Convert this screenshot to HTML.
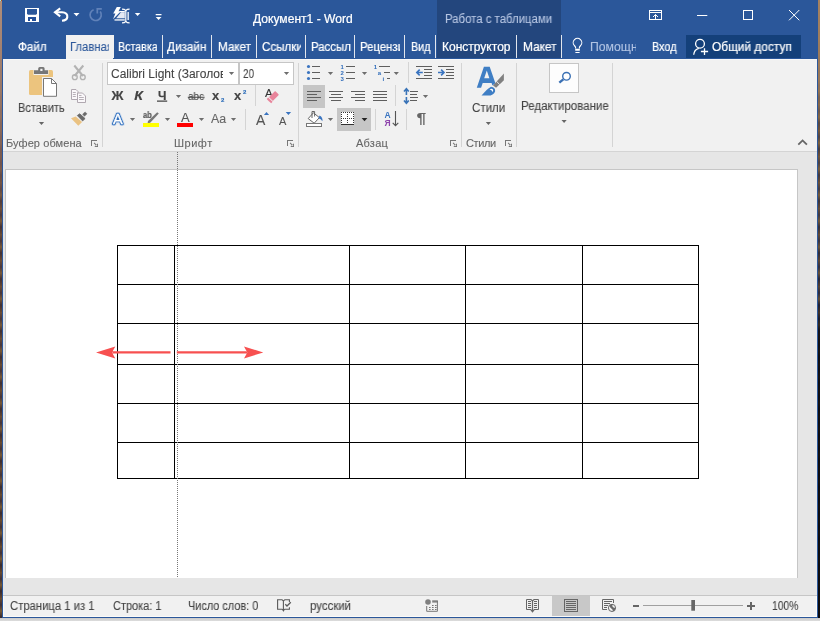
<!DOCTYPE html>
<html lang="ru"><head><meta charset="utf-8"><title>Документ1 - Word</title>
<style>
html,body{margin:0;padding:0}
body{width:820px;height:621px;overflow:hidden;position:relative;background:linear-gradient(#d9d9d9,#d9d9d9 618px,#cbcbcb 618px,#dcdcdc 621px);font-family:"Liberation Sans",sans-serif;font-size:12px;color:#444}
.a{position:absolute}
.t{will-change:transform;-webkit-text-stroke:0.1px;position:absolute;white-space:nowrap;line-height:14px;height:14px;transform-origin:0 0}
#deskL{left:0;top:0;width:2px;height:618px;background:linear-gradient(rgba(176,142,122,1) 0,rgba(154,120,104,.95) 100px,rgba(122,90,80,.9) 160px,rgba(90,64,56,.55) 220px,rgba(70,50,40,.45) 618px),repeating-linear-gradient(#8a6434 0,#3a3044 7px,#a07a3c 13px,#2a2234 19px,#7a5530 26px)}
#deskR{left:818px;top:0;width:2px;height:618px;background:linear-gradient(rgba(166,130,96,1) 0,rgba(156,122,90,.95) 80px,rgba(110,84,64,.6) 130px,rgba(40,36,50,.5) 300px,rgba(10,10,16,.92) 340px,rgba(8,8,12,.96) 618px),repeating-linear-gradient(#8a6434 0,#2a3050 7px,#a07a3c 13px,#1a2240 19px,#7a5530 26px)}
#win{left:2px;top:0;width:816px;height:618px;background:#2b579a}
#title{left:3px;top:0;width:814px;height:59px;background:#2b579a}
#ctx{left:437px;top:0;width:124px;height:58px;background:#23467d}
#ribbon{left:3px;top:59px;width:814px;height:92px;background:#f1f1f1;border-top:1px solid #f8f8f8;box-sizing:border-box}
#ribline{left:3px;top:151px;width:814px;height:1px;background:#d4d4d4}
#doc{left:3px;top:152px;width:814px;height:443px;background:#e6e6e6}
#page{left:5px;top:169px;width:793px;height:409px;background:#fff;border:1px solid #c6c6c6;border-bottom:none;box-sizing:border-box}
#stline{left:3px;top:595px;width:814px;height:1px;background:#c6c6c6}
#status{left:3px;top:596px;width:814px;height:21px;background:#f1f1f1;border-bottom:1px solid #fbfaf7;border-right:1px solid #fbfaf7;border-left:1px solid #fbfaf7;box-sizing:border-box}
.tab{color:#fff}
.sep{position:absolute;width:1px;background:#d4d4d4}
.tsep{position:absolute;width:1px;top:35px;height:23px;background:#e2e6ee}
</style></head><body>
<div class="a" id="win"></div>
<div class="a" id="deskL"></div><div class="a" id="deskR"></div>
<div class="a" id="title"></div>
<div class="a" id="ctx"></div>
<div class="a" id="ribbon"></div>
<div class="a" id="ribline"></div>
<div class="a" id="doc"></div>
<div class="a" id="page"></div>
<div class="a" id="stline"></div>
<div class="a" id="status"></div>
<div class="a" style="left:0;top:0;width:1px;height:1px;background:#a0f0e0;z-index:3"></div><div class="a" style="left:1px;top:0;width:1px;height:1px;background:#b84a10;z-index:3"></div>
<div class="a" style="left:66px;top:35px;width:48px;height:24px;background:#f1f1f1"></div><div class="a" style="left:113px;top:58px;width:1px;height:1px;background:#2b579a"></div>
<div class="a" style="left:686px;top:35px;width:115px;height:23px;background:#14407a"></div>
<div class="tsep" style="left:162px"></div><div class="tsep" style="left:211px"></div><div class="tsep" style="left:256px"></div><div class="tsep" style="left:305px"></div><div class="tsep" style="left:354px"></div><div class="tsep" style="left:404px"></div><div class="tsep" style="left:435px"></div><div class="tsep" style="left:516px"></div><div class="tsep" style="left:561px"></div>
<div class="sep" style="left:102px;top:63px;height:84px"></div>
<div class="sep" style="left:298px;top:63px;height:84px"></div>
<div class="sep" style="left:461px;top:63px;height:84px"></div>
<div class="sep" style="left:516px;top:63px;height:84px"></div>
<div class="sep" style="left:612px;top:63px;height:84px"></div>
<div class="sep" style="left:255px;top:85px;height:21px"></div>
<div class="sep" style="left:245px;top:109px;height:21px"></div>
<div class="sep" style="left:408px;top:62px;height:21px"></div>
<div class="sep" style="left:395px;top:85px;height:21px"></div>
<div class="sep" style="left:375px;top:109px;height:21px"></div>
<div class="sep" style="left:406px;top:109px;height:21px"></div>
<div class="a" style="left:107px;top:62px;width:132px;height:23px;box-sizing:border-box;border:1px solid #c6c6c6;background:#fff"></div>
<div class="a" style="left:239px;top:62px;width:55px;height:23px;box-sizing:border-box;border:1px solid #c6c6c6;background:#fff"></div>
<div class="a" style="left:303px;top:85px;width:22px;height:23px;background:#c6c6c6"></div>
<div class="a" style="left:337px;top:108px;width:34px;height:23px;background:#c6c6c6"></div>
<div class="a" style="left:549px;top:63px;width:30px;height:30px;box-sizing:border-box;border:1px solid #c6c6c6;background:#fdfdfd"></div>
<div class="a" style="left:552px;top:596px;width:38px;height:20px;background:#c8c8c8"></div>

<svg class="a" style="left:0;top:0" width="820" height="621" viewBox="0 0 820 621">
<g fill="none" stroke="#000" stroke-width="1" shape-rendering="crispEdges">
<rect x="117.500" y="245.500" width="581" height="233"/>
<path d="M117,284.500 H699 M117,323.500 H699 M117,364.500 H699 M117,403.500 H699 M117,442.500 H699"/>
<path d="M174.500,245 V479 M349.500,245 V479 M465.500,245 V479 M582.500,245 V479"/>
</g>
<path d="M177.500,152 V578" stroke="#777" stroke-width="1" stroke-dasharray="1 1" fill="none" shape-rendering="crispEdges"/>
<g fill="#f75050">
<path d="M112.500,351.300 H170.500 V353.500 H112.500z M96,352.400 L115.300,346.400 L112,352.400 L115.300,358.400z"/>
<path d="M176.800,351.300 H247 V353.500 H176.800z M263.300,352.400 L244,346.400 L247.300,352.400 L244,358.400z"/>
</g>
</svg>

<div class="t" style="left:253px;top:11.99px;color:#fff;-webkit-text-stroke:0.22px;transform:scaleX(1.0068);">Документ1 - Word</div>
<div class="t" style="left:445px;top:11.99px;color:#b7c6e3;transform:scaleX(0.9482);">Работа с таблицами</div>
<div class="t" style="left:18px;top:39.99px;color:#fff;-webkit-text-stroke:0.22px;transform:scaleX(0.9741);">Файл</div>
<div class="t" style="left:69.5px;top:39.99px;color:#2b579a;width:41.70px;overflow:hidden;transform:scaleX(0.94);">Главная</div>
<div class="t" style="left:118.3px;top:39.99px;color:#fff;-webkit-text-stroke:0.22px;width:44.04px;overflow:hidden;transform:scaleX(0.89);">Вставка</div>
<div class="t" style="left:167px;top:39.99px;color:#fff;-webkit-text-stroke:0.22px;transform:scaleX(0.9791);">Дизайн</div>
<div class="t" style="left:217.5px;top:39.99px;color:#fff;-webkit-text-stroke:0.22px;transform:scaleX(0.9715);">Макет</div>
<div class="t" style="left:261.5px;top:39.99px;color:#fff;-webkit-text-stroke:0.22px;width:40.21px;overflow:hidden;transform:scaleX(0.965);">Ссылки</div>
<div class="t" style="left:310.5px;top:39.99px;color:#fff;-webkit-text-stroke:0.22px;width:41.68px;overflow:hidden;transform:scaleX(0.95);">Рассылки</div>
<div class="t" style="left:359.5px;top:39.99px;color:#fff;-webkit-text-stroke:0.22px;width:42.33px;overflow:hidden;transform:scaleX(0.945);">Рецензирование</div>
<div class="t" style="left:410.5px;top:39.99px;color:#fff;-webkit-text-stroke:0.22px;transform:scaleX(0.8978);">Вид</div>
<div class="t" style="left:441.5px;top:39.99px;color:#fff;-webkit-text-stroke:0.22px;transform:scaleX(1.0011);">Конструктор</div>
<div class="t" style="left:522.5px;top:39.99px;color:#fff;-webkit-text-stroke:0.22px;transform:scaleX(0.9862);">Макет</div>
<div class="t" style="left:590px;top:39.99px;color:#b0c3e3;width:44.71px;overflow:hidden;transform:scaleX(1.02);">Помощник</div>
<div class="t" style="left:651.5px;top:39.99px;color:#fff;-webkit-text-stroke:0.22px;transform:scaleX(0.9022);">Вход</div>
<div class="t" style="left:712.4px;top:39.99px;color:#fff;-webkit-text-stroke:0.22px;transform:scaleX(0.9898);">Общий доступ</div>
<div class="t" style="left:17.7px;top:100.99px;color:#444;transform:scaleX(0.9199);">Вставить</div>
<div class="t" style="left:6.4px;top:136.14px;color:#666;font-size:11px;letter-spacing:0.086px;">Буфер обмена</div>
<div class="t" style="left:173.7px;top:136.14px;color:#666;font-size:11px;letter-spacing:0.499px;">Шрифт</div>
<div class="t" style="left:356px;top:136.14px;color:#666;font-size:11px;letter-spacing:0.235px;">Абзац</div>
<div class="t" style="left:465.9px;top:136.14px;color:#666;font-size:11px;letter-spacing:-0.401px;">Стили</div>
<div class="t" style="left:472.3px;top:100.99px;color:#444;transform:scaleX(0.9630);">Стили</div>
<div class="t" style="left:520.8px;top:98.99px;color:#444;transform:scaleX(0.9604);">Редактирование</div>
<div class="t" style="left:111px;top:66.99px;color:#444;width:111.70px;overflow:hidden;transform:scaleX(1.0);">Calibri Light (Заголовки)</div>
<div class="t" style="left:242.5px;top:66.99px;color:#444;transform:scaleX(0.8234);">20</div>
<div class="t" style="left:10px;top:598.99px;color:#444;transform:scaleX(0.9394);">Страница 1 из 1</div>
<div class="t" style="left:112.5px;top:598.99px;color:#444;transform:scaleX(0.9143);">Строка: 1</div>
<div class="t" style="left:187.5px;top:598.99px;color:#444;transform:scaleX(0.9086);">Число слов: 0</div>
<div class="t" style="left:309.7px;top:598.99px;color:#444;transform:scaleX(0.9521);">русский</div>
<div class="t" style="left:771.6px;top:598.99px;color:#444;transform:scaleX(0.8598);">100%</div>
<div class="t" style="left:111.83px;top:88.99px;color:#444;font-weight:bold;transform:scaleX(1.1);transform-origin:50% 50%;-webkit-text-stroke:0.15px;">Ж</div>
<div class="t" style="left:135.04px;top:88.99px;color:#444;font-weight:bold;font-style:italic;transform:scaleX(1.18);transform-origin:50% 50%;-webkit-text-stroke:0.15px;">К</div>
<div class="t" style="left:157.63px;top:88.99px;color:#444;font-weight:bold;-webkit-text-stroke:0.15px;">Ч</div>
<div class="t" style="left:188.2px;top:89.34px;color:#444;font-size:11px;transform:scaleX(0.9070);">abc</div>
<div class="t" style="left:212.08px;top:88.65px;color:#444;font-weight:bold;font-size:13px;-webkit-text-stroke:0.15px;">x</div>
<div class="t" style="left:234.28px;top:88.65px;color:#444;font-weight:bold;font-size:13px;-webkit-text-stroke:0.15px;">x</div>
<div class="t" style="left:220.88px;top:93.07px;color:#2b6cb8;font-weight:bold;font-size:6px;-webkit-text-stroke:0.15px;">2</div>
<div class="t" style="left:242.98px;top:85.07px;color:#2b6cb8;font-weight:bold;font-size:6px;-webkit-text-stroke:0.15px;">2</div>
<div class="t" style="left:181.21px;top:111.25px;color:#555;font-size:13px;">A</div>
<div class="t" style="left:211.1px;top:111.59px;color:#666;transform:scaleX(1.0281);">Aa</div>
<div class="t" style="left:256.08px;top:113.30px;color:#555;font-size:14px;">A</div>
<div class="t" style="left:279.08px;top:114.34px;color:#555;font-size:11px;">A</div>
<div class="t" style="left:264.56px;top:86.17px;color:#333;font-size:11.5px;">A</div>
<div class="t" style="left:143px;top:107.90px;color:#555;font-size:8.5px;font-weight:bold;-webkit-text-stroke:0.15px;transform:scaleX(0.8869);">ab</div>
<svg class="a" style="left:0;top:0" width="820" height="621" viewBox="0 0 820 621">
<!-- QAT: save -->
<g id="ic-save">
<rect x="25" y="8" width="14" height="14" fill="#fff"/>
<path d="M27,9 h10 v4.700 l-1,1 h-8 l-1,-1z" fill="#2b579a"/>
<path d="M28,17 h8 v4 h-4 v-2 h-2 v2 h-2z" fill="#24509a"/>
</g>
<!-- undo -->
<g id="ic-undo" fill="none" stroke="#fff" stroke-width="2.1">
<path d="M60.2,8.3 L55,12.3 L60.2,16.3"/>
<path d="M55.5,12.3 H62 C66,12.3 67.6,14.8 67.3,17 C67,19.5 64.8,20.6 62,20.8"/>
</g>
<path d="M73.5,13 h6 l-3,3.2z" fill="#fff"/>
<!-- redo (disabled) -->
<g id="ic-redo" fill="none" stroke="#6182b9" stroke-width="1.7">
<path d="M93.6,9.7 A5.6,5.6 0 1 0 100.2,11.6"/>
<path d="M97.3,13.6 V8.9 H101.8"/>
</g>
<!-- touch mode -->
<g id="ic-touch" fill="#fff">
<path d="M116.8,7 h4 l-2.300,4.200 h2.300 l-7.800,8 l2.400,-5.800 h-2.200z"/>
<path d="M121,12.300 h3.800 v6 h-8.600z" fill="#e4e9f3"/>
<path d="M114.500,19.300 h10.300 v1.300 h-10.300z"/>
<path d="M119.800,11 h5 v1.200 h-5.500z"/>
<path d="M122,8.600 q3,0 3.800,1.200 q0.800,-1.200 3.800,-1.200 v1.100 q-2.700,0 -3.200,1.300 v10 q0.500,1.300 3.200,1.300 v1.100 q-3,0 -3.800,-1.200 q-0.800,1.200 -3.800,1.200 v-1.100 q2.700,0 3.200,-1.300 v-10 q-0.500,-1.300 -3.200,-1.300z"/>
<path d="M127.500,12 h1.300 v8 h-1.300z"/>
</g>
<path d="M134.8,12.9 h5.6 l-2.8,3z" fill="#fff"/>
<path d="M155.7,13.9 h5.8 v1.3 h-5.8z M155.7,16.9 h5.8 l-2.9,3.1z" fill="#fff"/>
<!-- window controls -->
<g fill="none" stroke="#fff" stroke-width="1">
<rect x="649.5" y="10.5" width="12" height="9"/>
<path d="M649.5,12.500 h12 M655.500,14.500 v5 M653,17 l2.500,-2.500 l2.500,2.500"/>
<path d="M697,15.500 h10.300"/>
<rect x="743.5" y="10.5" width="9" height="9"/>
<path d="M789,10 l10.3,10.3 M799.3,10 l-10.3,10.3"/>
</g>
<!-- paste -->
<g id="ic-paste">
<rect x="29" y="70" width="24" height="25" rx="1.500" fill="#ecc47e"/>
<rect x="33.500" y="70" width="15" height="5" fill="#f1f1f1"/>
<path d="M38.200,70.200 v-1.700 q0,-1.500 1.500,-1.500 h3.400 q1.500,0 1.500,1.500 v1.700 h3.400 v3.800 h-14 v-3.800z" fill="#777"/>
<rect x="40.300" y="68.800" width="2.200" height="2.200" fill="#f4f4f4"/>
<rect x="42" y="77" width="16" height="21" fill="#f1f1f1"/>
<path d="M43.500,78.500 h8 l5,5 v12.800 h-13z" fill="#fff" stroke="#777" stroke-width="1" stroke-linejoin="miter"/>
<path d="M51.500,78.500 v5 h5" fill="none" stroke="#777" stroke-width="1"/>
</g>
<!-- cut (disabled) -->
<g id="ic-cut" fill="none" stroke="#b3b3b3">
<path d="M74.3,65.5 L83,76 M83.3,65.5 L74.6,76" stroke-width="2.1"/>
<circle cx="74.8" cy="77.2" r="2.4" stroke-width="1.4"/>
<circle cx="82.8" cy="77.2" r="2.4" stroke-width="1.4"/>
</g>
<!-- copy (disabled) -->
<g id="ic-copy" fill="#faf8fa" stroke="#b0a8b0" stroke-width="1">
<path d="M71.500,89.500 h4.5 l2,2 v8 h-6.5z"/>
<path d="M72.8,92.5 h3 M72.8,94.5 h3 M72.8,96.500 h3" stroke-width="0.9"/>
<path d="M77.500,93 h5 l3,3 v6.500 h-8z"/>
<path d="M79,97.500 h4.800 M79,99.500 h4.800 M79,95.500 h2.500" stroke-width="0.9"/>
</g>
<!-- format painter -->
<g id="ic-fp">
<path d="M71,118.300 L75.700,116.500 L82.100,121.900 L78.300,125.800 Z" fill="#eac282"/>
<path d="M77.300,115.500 L79.700,113.800 L85.100,118.600 L82.600,120.900 Z" fill="#6a6a6a" stroke="#6a6a6a" stroke-width="0.800" stroke-linejoin="round"/>
<path d="M82.600,114.300 L85,111.900 L87,113.800 L84.500,116.300 Z" fill="#6a6a6a" stroke="#6a6a6a" stroke-width="0.500" stroke-linejoin="round"/>
</g>

<!-- dropdown arrows -->
<path d="M175.9,95 h5.2 l-2.6,3z M129.9,118 h5.2 l-2.6,3z M164.9,118 h5.2 l-2.6,3z M198.9,118 h5.2 l-2.6,3z M230.9,118 h5.2 l-2.6,3z M228.9,72 h5.2 l-2.6,3z M283.9,72 h5.2 l-2.6,3z M327.9,72 h5.2 l-2.6,3z M361.9,72 h5.2 l-2.6,3z M393.7,72 h5.2 l-2.6,3z M422.9,95 h5.2 l-2.6,3z M327.9,118 h5.2 l-2.6,3z " fill="#6e6e6e"/>
<path d="M361.600,118 h5.800 l-2.900,3.200z" fill="#222"/>
<path d="M485.800,122 h5.200 l-2.600,3z M561.500,120 h5.200 l-2.600,3z M38.900,122 h5.200 l-2.600,3z" fill="#666"/>
<!-- underline, strike -->
<path d="M157,100.600 h10.200 v1.200 h-10.200z M187.800,96.700 h16.800 v1 h-16.800z" fill="#444"/>
<!-- text effects A -->
<g font-family="Liberation Sans, sans-serif" font-size="14.500" stroke-linejoin="round" stroke-linecap="round">
<text x="113" y="123.500" fill="none" stroke="#8fb3e3" stroke-width="4.200" opacity="0.300">A</text>
<text x="113" y="123.500" fill="#2f6fbe" stroke="#2f6fbe" stroke-width="2.300">A</text>
<text x="113" y="123.500" fill="#fff" stroke="#fff" stroke-width="0.350">A</text>
</g>
<!-- highlighter -->
<path d="M157.200,112.300 l1.600,1.200 l-8.600,9.300 l-2.600,0.600 l0.400,-2.400z" fill="#777"/>
<rect x="143" y="123" width="16" height="4" fill="#ffff00"/>
<!-- font color bar -->
<rect x="177" y="123" width="16" height="4" fill="#ff0000"/>
<!-- grow/shrink triangles -->
<path d="M263.900,115 h5.200 l-2.600,-3z M285.700,112 h5.400 l-2.700,3.100z" fill="#3a74c0"/>
<!-- eraser -->
<g transform="translate(273.950,95.950) rotate(-46)">
<rect x="-4.350" y="-2.700" width="8.700" height="5.400" rx="0.600" fill="#e8849b"/>
<path d="M-7.150,-3.100 h2 v6.200 h-2 q-0.400,-3.100 0,-6.200z" fill="#e8849b"/>
</g>
<!-- paragraph group -->
<g fill="#3a74c0"><circle cx="308.500" cy="66.500" r="1.550"/><circle cx="308.500" cy="72.500" r="1.550"/><circle cx="308.500" cy="78.500" r="1.550"/></g>
<path d="M312,66 h8 v1 h-8z M312,72 h8 v1 h-8z M312,78 h8 v1 h-8z " fill="#5e5e5e"/>
<g font-family="Liberation Sans, sans-serif" font-size="6" font-weight="bold" fill="#2f6cba"><text x="340.600" y="69">1</text><text x="340.600" y="75">2</text><text x="340.600" y="81">3</text></g>
<path d="M346,66 h9 v1 h-9z M346,72 h9 v1 h-9z M346,78 h9 v1 h-9z " fill="#5e5e5e"/>
<g font-family="Liberation Sans, sans-serif" font-size="6" font-weight="bold" fill="#2f6cba"><text x="373.800" y="69">1</text><text x="377.800" y="75">a</text><text x="382.500" y="81">i</text></g>
<path d="M379,66 h11 v1 h-11z M384,72 h6 v1 h-6z M387,78 h3 v1 h-3z " fill="#5e5e5e"/>
<path d="M416,66 h16 v1 h-16z M424,69 h8 v1 h-8z M424,72 h8 v1 h-8z M424,75 h8 v1 h-8z M416,78 h16 v1 h-16z " fill="#5e5e5e"/>
<path d="M438,66 h16 v1 h-16z M446,69 h8 v1 h-8z M446,72 h8 v1 h-8z M446,75 h8 v1 h-8z M438,78 h16 v1 h-16z " fill="#5e5e5e"/>
<g fill="none" stroke="#3a74c0" stroke-width="1.600"><path d="M416.800,72.500 h6 M419.700,69.600 l-2.900,2.900 l2.900,2.900"/><path d="M438,72.500 h6 M441.100,69.600 l2.900,2.900 l-2.900,2.900"/></g>
<path d="M307,91 h14 v1 h-14z M307,94 h10 v1 h-10z M307,97 h14 v1 h-14z M307,100 h10 v1 h-10z " fill="#5e5e5e"/>
<path d="M329,91 h14 v1 h-14z M331,94 h10 v1 h-10z M329,97 h14 v1 h-14z M331,100 h10 v1 h-10z " fill="#5e5e5e"/>
<path d="M351,91 h14 v1 h-14z M355,94 h10 v1 h-10z M351,97 h14 v1 h-14z M355,100 h10 v1 h-10z " fill="#5e5e5e"/>
<path d="M373,91 h14 v1 h-14z M373,94 h14 v1 h-14z M373,97 h14 v1 h-14z M373,100 h14 v1 h-14z " fill="#5e5e5e"/>
<path d="M410,91 h8 v1 h-8z M410,94 h7 v1 h-7z M410,97 h8 v1 h-8z M410,100 h7 v1 h-7z " fill="#5e5e5e"/>
<g fill="none" stroke="#3a74b8" stroke-width="1.600"><path d="M406.400,88.600 v6.300 M404,91.600 l2.400,-2.800 l2.400,2.800 M406.400,97.100 v6.300 M404,100.400 l2.400,2.800 l2.400,-2.800"/></g>
<g><path d="M313.400,112.800 l6,4.800 l-5.200,5.600 l-6,-4.600z" fill="#fff" stroke="#666" stroke-width="1"/><path d="M312,118 v-6.500 h2.600 v5" fill="none" stroke="#666" stroke-width="1"/><path d="M319.600,115.600 q3.500,2 2.800,5.600 q-1.500,-2.600 -4,-3z" fill="#3a74c0"/><rect x="306.500" y="123.500" width="15" height="3" fill="#fff" stroke="#777" stroke-width="1"/></g>
<rect x="341" y="112" width="13" height="12" fill="#fff"/>
<g stroke="#333" stroke-width="1" stroke-dasharray="1 1" fill="none"><path d="M341,112.500 h13 M341,118.500 h13 M341.500,112 v12 M347.500,112 v12 M353.500,112 v12"/></g>
<path d="M341,124 h13 v1 h-13z" fill="#333"/>
<g font-family="Liberation Sans, sans-serif" font-weight="bold"><text x="384.600" y="117.600" font-size="8.500" fill="#3a74c0">A</text><text x="384.600" y="125.700" font-size="8.500" fill="#8e44ad">Я</text></g>
<path d="M395.500,111 v14.500 M392.700,122.800 l2.800,2.800 l2.800,-2.800" fill="none" stroke="#555" stroke-width="1.100"/>
<text transform="translate(416.600,122.700) scale(1.350,1.120)" font-family="Liberation Sans, sans-serif" font-size="13" font-weight="bold" fill="#666">¶</text>
<!-- styles icon -->
<g id="ic-styles">
<path d="M476.800,87.700 L483.900,66.800 H489.700 L495.400,83.200 L492.400,85.400 L491.600,83 H482.700 L481.100,87.700 Z M484.200,78.300 H489.400 L486.800,70.600 Z" fill="#3f7ec4" fill-rule="evenodd"/>
<path d="M493,85.400 L503.900,73.500 V80.300 L496.100,87.700 Z" fill="#808080"/>
<path d="M496.600,81.400 L499.600,84.600" stroke="#f1f1f1" stroke-width="0.900" fill="none"/>
<path d="M481.500,95.500 Q487.500,88.500 491,86.700 Q495.600,87.300 495.100,91.400 Q493.600,95.500 488,95.600 Z" fill="#3f7ec4"/>
<path d="M489.600,89.600 Q491.500,88 492.800,89.200 Q493.600,90.600 492.600,92 Q491.800,90 489.600,89.600z" fill="#fff"/>
</g>
<!-- find icon -->
<circle cx="566.500" cy="76.300" r="3.800" fill="#fff" stroke="#3a70b4" stroke-width="1.400"/>
<path d="M563.300,79.300 L559.300,82.700" stroke="#3a70b4" stroke-width="2.300" fill="none"/>
<!-- launchers -->
<g id="launchers" fill="#777">
<path d="M91,140 h6 v1 h-5 v5 h-1z M94.300,146.900 h3.700 v-3.700z M93.700,143.300 l0.700,-0.700 l3,3 l-0.700,0.700z"/>
<path d="M287,140 h6 v1 h-5 v5 h-1z M290.300,146.900 h3.700 v-3.700z M289.700,143.300 l0.700,-0.700 l3,3 l-0.700,0.700z"/>
<path d="M450,140 h6 v1 h-5 v5 h-1z M453.300,146.900 h3.700 v-3.700z M452.700,143.300 l0.700,-0.700 l3,3 l-0.700,0.700z"/>
<path d="M505,140 h6 v1 h-5 v5 h-1z M508.300,146.900 h3.700 v-3.700z M507.700,143.300 l0.700,-0.700 l3,3 l-0.700,0.700z"/>
</g>
<!-- collapse caret -->
<path d="M798.300,144.700 L802.600,140.400 L806.900,144.700" fill="none" stroke="#666" stroke-width="1.800"/>
<!-- bulb -->
<g fill="none" stroke="#fff" stroke-width="1.100">
<path d="M575.600,48.500 v-1 q0,-0.800 -1.300,-2 a4.300,4.300 0 1 1 6.400,0 q-1.300,1.200 -1.300,2 v1"/>
</g>
<path d="M575.200,48.800 h4.600 v1.900 h-4.600z M575.400,52 h4.200 v1 h-4.200z" fill="#fff"/>
<!-- share -->
<g fill="none" stroke="#fff" stroke-width="1.300">
<circle cx="700" cy="43.800" r="4.400"/>
<path d="M693.700,54.800 Q694.200,49.400 698.800,48.300"/>
<path d="M700.900,51.500 h7.200 M704.500,48.200 v6.800"/>
</g>
<!-- status: proofing -->
<g fill="none" stroke="#595959" stroke-width="1.100">
<path d="M283.400,601 L282,599.700 H277.600 V609.200 H282 L283.400,610.700 V601 L284.800,599.700 H289.400 V602 M289.400,607.300 V609.200 H284.800 L283.400,610.700"/>
<path d="M285.300,604.300 L287,606 L290.800,602.300" stroke-width="1.300"/>
</g>
<!-- status: macro -->
<g>
<circle cx="428" cy="602" r="2.800" fill="#808080"/>
<path d="M432.200,600.300 h5.700 v2.300 h-5.700z" fill="#808080"/>
<path d="M426.700,606 V611.300 H437.400 V601" fill="none" stroke="#777" stroke-width="1"/>
<path d="M432,605 h1.600 v1 h-1.600z M435,605 h1.600 v1 h-1.600z M429,607 h1.600 v1 h-1.600z M432,607 h1.600 v1 h-1.600z M435,607 h1.600 v1 h-1.600z M429,609 h1.600 v1 h-1.600z M432,609 h1.600 v1 h-1.600z M435,609 h1.600 v1 h-1.600z" fill="#777"/>
</g>
<!-- status: view buttons -->
<g fill="none" stroke="#666" stroke-width="1">
<path d="M531,599.500 H526.500 V609.500 H531 M534,599.500 H538.500 V609.500 H534"/>
<path d="M530.800,599.300 L532.500,601 L534.200,599.300 M532.500,600.500 V611.500 M530.800,609.600 L532.500,611.800 L534.200,609.600" stroke-width="1.200"/>
<path d="M528,601.500 h3 M528,603.500 h3 M528,605.500 h3 M528,607.500 h3 M534,601.500 h3 M534,603.500 h3 M534,605.500 h3 M534,607.500 h3"/>
<rect x="564.500" y="599.500" width="13" height="12"/>
<path d="M566,601.500 h10 M566,603.500 h10 M566,605.500 h10 M566,607.500 h10 M566,609.500 h10"/>
<path d="M607,609.500 H602.500 V599.500 H613.500 V603"/>
<path d="M604,601.500 h8 M604,603.500 h6 M604,605.500 h4 M604,607.500 h3"/>
</g>
<circle cx="612" cy="607.900" r="3.600" fill="#f4f4f4" stroke="#666" stroke-width="1"/>
<path d="M609.300,605.600 q2,-1.600 3.300,-0.800 q-0.800,1.200 0.300,2.300 q1.200,1 2.400,0.300 q0.400,2.800 -2.200,3.800 q-0.500,-1.800 -1.800,-2.600 q-1.500,-1 -2,-3z" fill="#6a6a6a"/>
<!-- zoom slider -->
<path d="M633,605 h6 v2 h-6z M747,605 h8 v2 h-8z M750,602 h2 v8 h-2z" fill="#666"/>
<path d="M643,605 h100 v1 h-100z" fill="#a0a0a0"/>
<rect x="691.300" y="600" width="3.700" height="10.700" fill="#666"/>
</svg>
</body></html>
